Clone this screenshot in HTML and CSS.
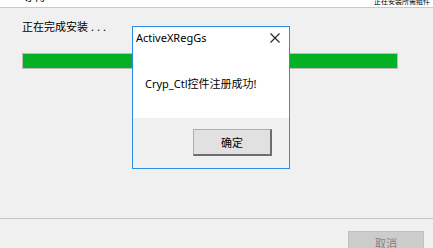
FILE: index.html
```html
<!DOCTYPE html>
<html lang="zh-CN">
<head>
    <meta charset="UTF-8">
    <title>安装</title>
    <link rel="stylesheet" href="styles.css">
</head>
<body>
    <div class="wizard">
        <div class="header">
            <span class="header-title">等待</span>
            <span class="header-note">正在安装所需组件</span>
        </div>

        <div class="content">
            <p class="status">正在完成安装<span class="dots">...</span></p>
            <div class="progress"><div class="progress-fill"></div></div>
        </div>

        <div class="footer">
            <button class="btn btn-cancel" disabled>取消</button>
        </div>
    </div>

    <div class="dialog">
        <div class="dialog-title">
            <span>ActiveXRegGs</span>
            <svg class="close" width="10" height="10" viewBox="0 0 10 10">
                <path d="M0.5 0.5 L9.5 9.5 M9.5 0.5 L0.5 9.5" stroke="#222" stroke-width="1.1" fill="none"/>
            </svg>
        </div>
        <div class="dialog-body">Cryp_Ctl控件注册成功!</div>
        <div class="dialog-footer">
            <button class="btn btn-ok">确定</button>
        </div>
    </div>
</body>
</html>
```

FILE: styles.css
```css
* {
    margin: 0;
    padding: 0;
    box-sizing: border-box;
}

body {
    background: #f0f0f0;
    font-family: 'Noto Sans', 'Noto Sans CJK SC', sans-serif;
    font-size: 11px;
    color: #000;
    width: 433px;
    height: 248px;
    overflow: hidden;
}

.wizard {
    display: flex;
    flex-direction: column;
    height: 100%;
}

.header {
    height: 8px;
    background: #fff;
    border-bottom: 1px solid #c8c8c8;
    display: flex;
    justify-content: space-between;
    overflow: hidden;
    padding: 0 3px 0 22px;
}

.header-title {
    font-size: 12px;
    line-height: 12px;
    margin-top: -9px;
}

.header-note {
    font-size: 7px;
    line-height: 7px;
    margin-top: -2px;
}

.content {
    flex: 1;
    padding: 11px 35px 0 22px;
}

.status {
    line-height: 16px;
}

.dots {
    letter-spacing: 3px;
    margin-left: 3px;
}

.progress {
    margin-top: 18px;
    height: 16px;
    border: 1px solid #bcbcbc;
    background: #e6e6e6;
}

.progress-fill {
    width: 100%;
    height: 100%;
    background: #06b025;
}

.footer {
    height: 30px;
    border-top: 1px solid #c4c4c4;
    display: flex;
    justify-content: flex-end;
    padding: 12px 9px 0 0;
}

.btn {
    font-family: 'Noto Sans CJK SC', sans-serif;
    font-size: 11px;
}

.btn-cancel {
    width: 76px;
    height: 23px;
    background: #cccccc;
    border: 1px solid #bfbfbf;
    color: #838383;
}

.dialog {
    position: absolute;
    left: 132px;
    top: 26px;
    width: 158px;
    height: 143px;
    border: 1px solid #2b8de3;
    background: #f0f0f0;
    display: flex;
    flex-direction: column;
}

.dialog-title {
    height: 22px;
    background: #fff;
    display: flex;
    align-items: center;
    justify-content: space-between;
    padding: 0 9px 0 3px;
    line-height: 14px;
}

.dialog-body {
    background: #fff;
    height: 69px;
    padding: 28px 0 0 12px;
    line-height: 14px;
    white-space: nowrap;
}

.dialog-footer {
    flex: 1;
    display: flex;
    justify-content: flex-end;
    padding: 11px 17px 0 0;
}

.btn-ok {
    width: 79px;
    height: 27px;
    background: #e1e1e1;
    border: 1px solid #adadad;
    border-right: 2px solid #6e6e6e;
    border-bottom: 2px solid #6e6e6e;
    color: #000;
}
```
